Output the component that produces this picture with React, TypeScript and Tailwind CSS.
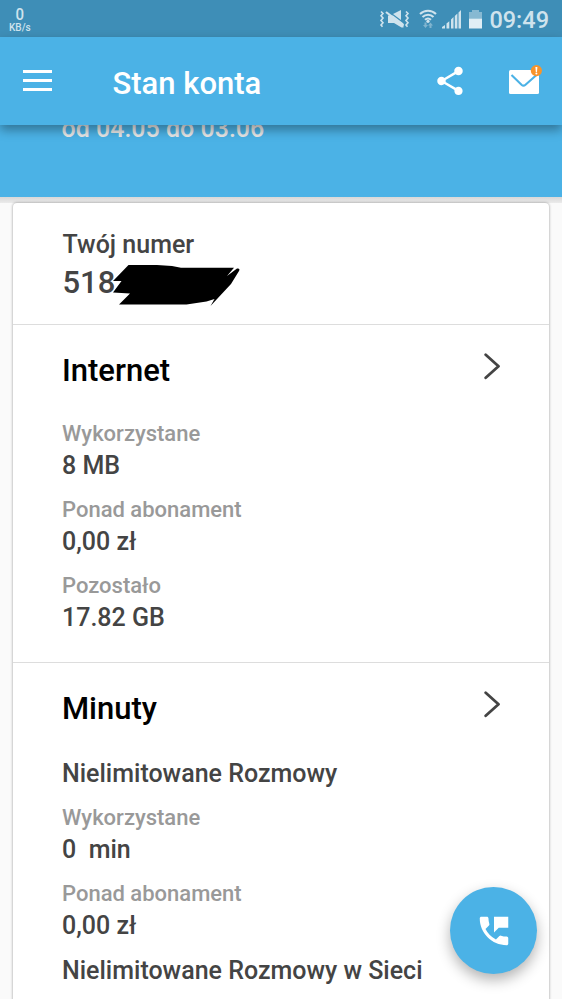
import { MdPermPhoneMsg, MdShare } from 'react-icons/md';

interface UsageItem {
  label: string;
  value: string;
}

const internetUsage: UsageItem[] = [
  { label: 'Wykorzystane', value: '8 MB' },
  { label: 'Ponad abonament', value: '0,00 zł' },
  { label: 'Pozostało', value: '17.82 GB' },
];

const callUsage: UsageItem[] = [
  { label: 'Wykorzystane', value: '0  min' },
  { label: 'Ponad abonament', value: '0,00 zł' },
];

function StatusIcons() {
  return (
    <svg width="104" height="20" viewBox="0 0 104 20" fill="#cfe3ed">
      {/* Muted / vibrate */}
      <path d="M2 2.500l2 2-2 2.300 2 2.300-2 2.300 2 2.300-2 2.300 1.500 1.800" fill="none" stroke="#cfe3ed" strokeWidth="1.600" />
      <path d="M27 2.500l2 2-2 2.300 2 2.300-2 2.300 2 2.300-2 2.300 1.500 1.800" fill="none" stroke="#cfe3ed" strokeWidth="1.600" />
      <path d="M14 5L22 1v10zM9 6.500h5L24.500 14.500v4h-2L15 14H9z" />
      <path d="M7 3L24.500 16.500" stroke="#cfe3ed" strokeWidth="2.200" />
      {/* Wi-Fi */}
      <g fill="none" stroke="#cfe3ed" strokeWidth="2.100">
        <path d="M41 5c4.500-4.300 11.500-4.300 16 0" />
        <path d="M43.500 8c3.200-3 8-3 11 0" />
        <path d="M46 10.800c1.700-1.500 4.300-1.500 6 0" />
      </g>
      <circle cx="49" cy="12.300" r="1.600" />
      <g opacity=".45">
        <path d="M45.500 13.500h2V16H49l-2.500 3-2.500-3h1.500z" />
        <path d="M50.500 19h2v-2.500H54l-2.500-3-2.500 3h1.500z" />
      </g>
      {/* Signal */}
      <path d="M63 19.500v-1.500l3-2v3.500zM67.500 19.500v-5l2.800-2.300v7.300zM72 19.500v-9l2.500-2.500v11.500zM75.800 19.500V7l2.600-2.500v15zM79.500 19.500V3.500L82 1v18.500z" />
      {/* Battery */}
      <path d="M90 3h3V1h7v2h3v6.500H90z" opacity=".5" />
      <path d="M90 9.500h13v10H90z" fill="#e0eef5" />
    </svg>
  );
}

function MailIcon() {
  return (
    <svg width="36" height="32" viewBox="0 0 36 32">
      <rect x="2" y="5" width="30" height="24" rx="1.500" fill="#fff" />
      <path d="M4.500 10L14.500 19.700q2 1.800 4 0L29.500 10" fill="none" stroke="#4bb2e6" strokeWidth="2.100" />
      <circle cx="29.400" cy="5.600" r="5.600" fill="#f7942b" />
      <path d="M28.400 2h2l-.4 4.900h-1.200z" fill="#fff" />
      <circle cx="29.400" cy="8.400" r="1" fill="#fff" />
    </svg>
  );
}

function Chevron() {
  return (
    <svg width="17" height="27" viewBox="0 0 17 27" fill="none" stroke="#444" strokeWidth="2.800" strokeLinecap="round" strokeLinejoin="round">
      <path d="M2.700 1.700L15.500 13.200 2.700 24.700" />
    </svg>
  );
}

function Usage({ item }: { item: UsageItem }) {
  return (
    <div className="mb-3">
      <div className="h-8 text-[22px] leading-[34px] text-[#999]">{item.label}</div>
      <div className="h-8 text-[25px] leading-[33px] whitespace-pre">{item.value}</div>
    </div>
  );
}

function SectionHeading({ title }: { title: string }) {
  return (
    <div className="flex h-9 justify-between pr-[49px]">
      <h2 className="text-[31px] leading-9 text-black">{title}</h2>
      <Chevron />
    </div>
  );
}

export default function App() {
  return (
    <div className="relative h-[999px] w-[562px] overflow-hidden bg-[#fafafa] font-['Roboto',sans-serif] font-medium text-[#444]">
      {/* Status bar */}
      <div className="relative z-10 flex h-[37px] items-start justify-between bg-[#3e8eb7] pr-[13px] pl-[9px] text-[#cfe3ed]">
        <div className="flex flex-col items-center pt-2">
          <span className="origin-bottom scale-y-110 text-[15px] leading-[14px]">0</span>
          <span className="pt-px text-[10px] leading-[9px]">KB/s</span>
        </div>
        <div className="flex pt-[9px]">
          <StatusIcons />
          <span className="-mt-[1px] ml-[6px] text-[23.500px] leading-6">09:49</span>
        </div>
      </div>

      {/* App bar */}
      <header className="relative z-10 flex h-[88px] items-center bg-[#4bb2e6] pl-[23px] text-white shadow-[0_5px_10px_rgba(0,0,0,0.35)]">
        <div className="flex w-[29px] flex-col gap-[6px] pb-[2px]">
          <span className="h-[3px] bg-white" />
          <span className="h-[3px] bg-white" />
          <span className="h-[3px] bg-white" />
        </div>
        <h1 className="ml-[60.500px] pt-[5px] text-[31px] leading-9">Stan konta</h1>
        <div className="ml-auto flex items-center gap-[40px] pr-[19px]">
          <MdShare size={34} />
          <MailIcon />
        </div>
      </header>

      <div className="h-[72px] overflow-hidden bg-[#4bb2e6] pl-[61.500px] text-[#e8e8e8]">
        <div className="-mt-3 text-[25px] leading-8">od 04.05 do 03.06</div>
      </div>

      {/* Account card */}
      <div className="h-[6px] bg-linear-to-b from-[#d8d8d8] to-[#ebebeb]" />
      <main className="mx-[13px] h-[830px] rounded-[4px] bg-white shadow-[0_0_3px_rgba(0,0,0,0.4)]">
        <section className="h-[121px] pt-[25px] pl-[49.500px]">
          <div className="h-8 text-[25px] leading-[33px]">Twój numer</div>
          <div className="flex h-10">
            <span className="w-[50px] text-[31px] leading-[46px]">518</span>
            <svg width="130" height="48" viewBox="0 0 130 48" className="shrink-0">
              <path d="M15.500 5H44l15 1 9 1.700H121L114 16l10-7.500q3.500-.5 2 2.500L118 24 97.500 46l4-7-8 2.500-20 3H6l11-11-17-1L8.500 21H0z" fill="#000" />
            </svg>
          </div>
        </section>
        <section className="h-[338px] border-t border-[#ddd] pt-[28px] pl-[49px]">
          <SectionHeading title="Internet" />
          <div className="pt-7">
            {internetUsage.map((item) => (
              <Usage key={item.label} item={item} />
            ))}
          </div>
        </section>
        <section className="border-t border-[#ddd] pt-[28px] pl-[49px]">
          <SectionHeading title="Minuty" />
          <div className="h-[62px] pt-[30px] text-[25px] leading-[33px]">Nielimitowane Rozmowy</div>
          <div className="pt-3">
            {callUsage.map((item) => (
              <Usage key={item.label} item={item} />
            ))}
          </div>
          <div className="pt-[2px] text-[25px] leading-8">Nielimitowane Rozmowy w Sieci</div>
        </section>
      </main>

      {/* Floating call button */}
      <button className="absolute top-[887px] left-[450px] flex size-[87px] items-center justify-center rounded-full bg-[#4bb2e6] text-white shadow-[0_6px_14px_rgba(0,0,0,0.3)]">
        <MdPermPhoneMsg size={38} />
      </button>
    </div>
  );
}
